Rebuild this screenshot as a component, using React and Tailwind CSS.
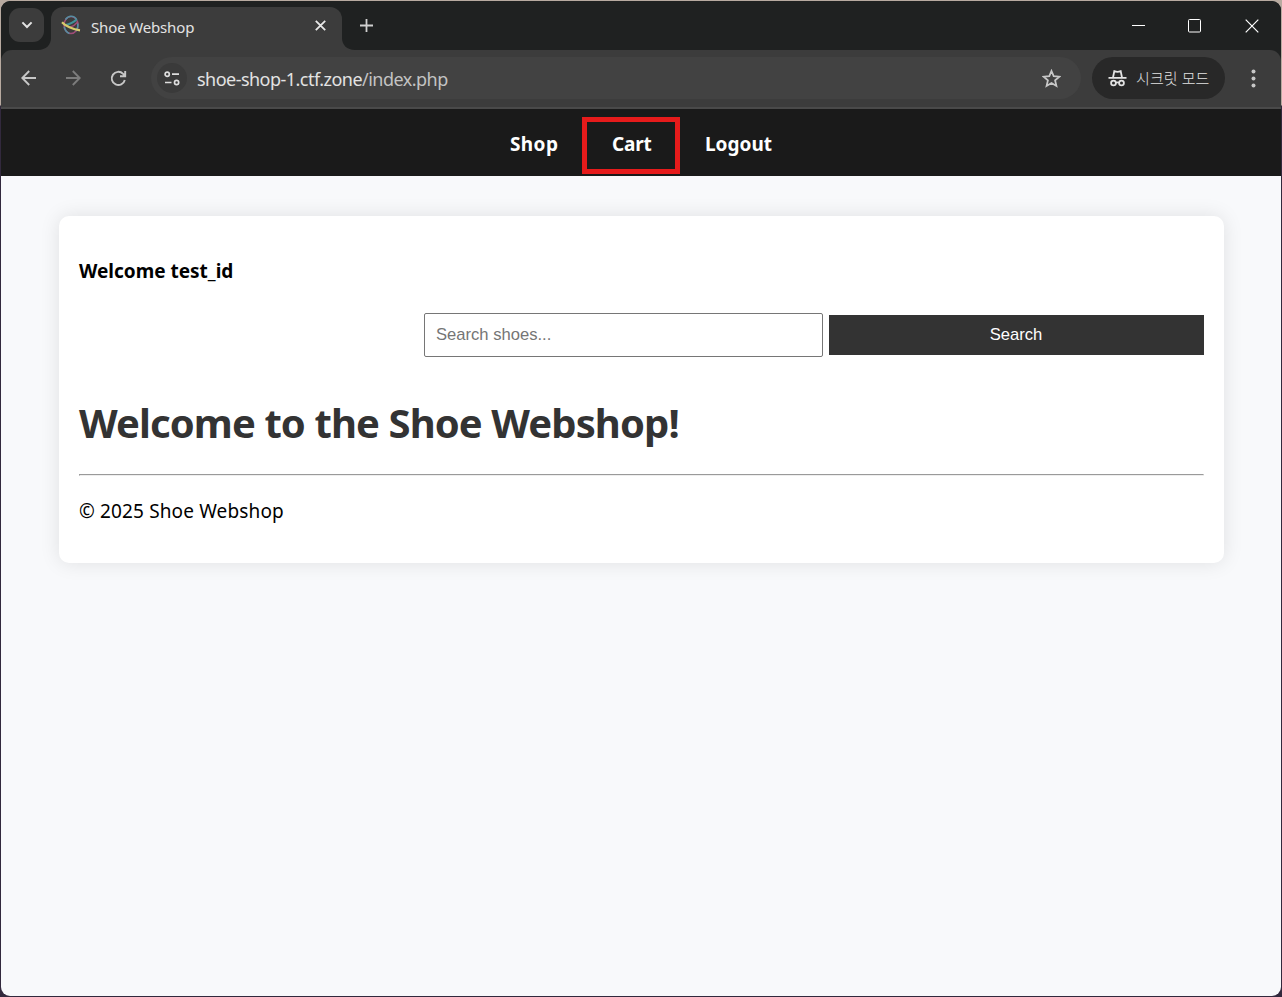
import React from "react";

function TabStrip() {
  return (
    <div className="flex h-[49px] bg-[#1f2121]">
      <div className="ml-2 mt-[7px] flex h-[34px] w-[35px] items-center justify-center rounded-[11px] bg-[#3c3c3c]">
        <svg width="12" height="8" viewBox="0 0 12 8" fill="none" stroke="#e3e3e3" strokeWidth="2">
          <path d="M1.400 1.400 6 6l4.600-4.600" />
        </svg>
      </div>
      <svg className="-mr-px ml-[-6px] mt-[37px] shrink-0" width="14" height="12" viewBox="0 0 14 12">
        <path d="M14 0v12H0C8 12 13 7 13 0z" fill="#3c3c3c" />
      </svg>
      <div className="mt-[6px] flex h-[43px] w-[291px] items-start rounded-t-[12px] bg-[#3c3c3c]">
        <svg className="ml-[10px] mt-[8px] shrink-0" width="20" height="21" viewBox="0 0 20 21" fill="none">
          <ellipse cx="10" cy="10" rx="7" ry="8.600" stroke="#a04c78" strokeWidth="1.500" />
          <path d="M4.500 4.500C6 2.300 8 1.300 10 1.300s4.500 1.200 5.800 3.600M3.200 12c1 3.500 3 5.800 5.200 6.400M16.900 8.500c.3 3-.3 5.500-1.700 7.500" stroke="#558fa3" strokeWidth="1.600" />
          <path d="M4 10.300c4-1 8.300-2.600 11.500-5.800" stroke="#3f9099" strokeWidth="2" />
          <path d="M9 12.300c3-1 5.500-2.600 7.800-5.300" stroke="#a04c78" strokeWidth="1.500" />
          <path d="M1 7.200c3 3.500 11 7.200 18 8.200" stroke="#d8ca6b" strokeWidth="2.200" />
        </svg>
        <span className="ml-[10px] mt-[9px] w-[104px] whitespace-nowrap text-[15px] leading-[23px] tracking-[-0.150px] text-[#e3e3e3]">Shoe Webshop</span>
        <svg className="ml-[120px] mt-[13px] shrink-0" width="11" height="11" viewBox="0 0 11 11" stroke="#e8e8e8" strokeWidth="1.800">
          <path d="m.8.8 9.400 9.400M10.200.8.8 10.200" />
        </svg>
      </div>
      <svg className="-ml-px mt-[37px] shrink-0" width="14" height="12" viewBox="0 0 14 12">
        <path d="M0 0v12h14C6 12 1 7 1 0z" fill="#3c3c3c" />
      </svg>
      <svg className="ml-[5px] mt-[18px] shrink-0" width="13" height="13" viewBox="0 0 13 13" stroke="#d0d0d0" strokeWidth="1.800">
        <path d="M6.500 0v13M0 6.500h13" />
      </svg>
      <div className="ml-auto mr-[22px] mt-[18px] flex items-start gap-[43px]">
        <svg width="13" height="14" viewBox="0 0 13 14"><path d="M0 6h13v1H0z" fill="#fff" /></svg>
        <svg width="14" height="14" viewBox="0 0 14 14" fill="none" stroke="#fff"><rect x=".5" y=".5" width="12" height="12.500" rx="1" /></svg>
        <svg width="14" height="14" viewBox="0 0 14 14" stroke="#fff" strokeWidth="1.200"><path d="m.7.700 12.600 12.600M13.300.700.7 13.300" /></svg>
      </div>
    </div>
  );
}

function Toolbar() {
  return (
    <div className="flex h-[59px] items-start rounded-t-[11px] border-b-2 border-[#4a4a4a] bg-[#3c3c3c]">
      <svg className="ml-5 mt-[20px]" width="15" height="16" viewBox="0 0 15 16" fill="none" stroke="#c7c7c7" strokeWidth="1.900">
        <path d="M15 8H1.400M8.200 1 1.300 8l6.900 7" />
      </svg>
      <svg className="ml-[30px] mt-[20px]" width="15" height="16" viewBox="0 0 15 16" fill="none" stroke="#7c7c7c" strokeWidth="1.900">
        <path d="M0 8h13.600M6.800 1l6.900 7-6.900 7" />
      </svg>
      <svg className="ml-[29px] mt-[20px]" width="17" height="17" viewBox="0 0 17 17" fill="none" stroke="#c7c7c7" strokeWidth="1.900">
        <path d="M14.800 10a6.600 6.600 0 1 1-1.700-6.200L15 5.700M15.200 1v5.200H10" />
      </svg>
      <div className="ml-[24px] mt-[7px] flex h-[42px] w-[930px] items-center rounded-full bg-[#424242]">
        <div className="ml-[6px] flex h-[30px] w-[30px] items-center justify-center rounded-full bg-[#3a3a3a]">
          <svg width="16" height="15" viewBox="0 0 16 15" fill="none" stroke="#dedede" strokeWidth="1.700">
            <circle cx="3.200" cy="3.200" r="2.100" />
            <path d="M8 3.200h7M1 11.500h6.500" />
            <circle cx="12.600" cy="11.500" r="2.100" />
          </svg>
        </div>
        <span className="ml-[10px] mt-[2px] whitespace-nowrap text-[18px] leading-6 tracking-[-0.530px] text-[#e3e3e3]">shoe-shop-1.ctf.zone<span className="text-[#c3c3c3]">/index.php</span></span>
        <svg className="ml-auto mr-5 mt-px" width="19" height="19" viewBox="0 0 19 19" fill="none" stroke="#c7c7c7" strokeWidth="1.800">
          <path d="m9.500 2 2.200 5.200 5.700.5-4.300 3.700 1.300 5.500-4.900-2.900-4.900 2.900 1.300-5.500-4.300-3.700 5.700-.5z" />
        </svg>
      </div>
      <div className="ml-[11px] mt-[7px] flex h-[42px] w-[133px] items-center rounded-full bg-[#282828]">
        <svg className="ml-4 shrink-0" width="19" height="18" viewBox="0 0 19 18" fill="none" stroke="#e3e3e3" strokeWidth="1.800">
          <path d="M5 8.500 6.300 2.200q3.200 1.200 6.400 0L14 8.500M.5 8.900h18" />
          <circle cx="5.500" cy="14" r="2.400" />
          <circle cx="13.500" cy="14" r="2.400" />
          <path d="M7.900 13.700q1.600-.8 3.200 0" />
        </svg>
        <span className="ml-[9px] whitespace-nowrap text-[15px] font-light leading-5 tracking-[0.100px] text-[#e3e3e3]">시크릿 모드</span>
      </div>
      <svg className="ml-[26px] mt-[19px]" width="5" height="19" viewBox="0 0 5 19" fill="#c7c7c7">
        <circle cx="2.500" cy="2.500" r="2" /><circle cx="2.500" cy="9.500" r="2" /><circle cx="2.500" cy="16.500" r="2" />
      </svg>
    </div>
  );
}

export default function App() {
  return (
    <div className="h-[997px] w-[1282px] overflow-hidden bg-[linear-gradient(#b8aaa0_0,#b8aaa0_105px,#32293d_106px)] p-px font-['Noto_Sans','Noto_Sans_CJK_KR',sans-serif]">
      <div className="flex h-[995px] w-[1280px] flex-col overflow-hidden rounded-[9px] bg-[#f8f9fb]">
        <div className="bg-[#1f2121]">
          <TabStrip />
          <Toolbar />
        </div>
        <nav className="flex h-[67px] shrink-0 items-start bg-[#1a1a1a] pl-[509px] pt-[21px] text-[19px] font-bold leading-7 text-white">
          <a className="w-[102px] tracking-[0.400px]">Shop</a>
          <a className="relative w-[93px] tracking-[-0.200px]">
            Cart
            <span className="absolute -left-[30px] -top-[13px] h-[57px] w-[98px] border-[5px] border-[#e61b1b]" />
          </a>
          <a>Logout</a>
        </nav>
        <main className="ml-[58px] mt-10 flex h-[347px] w-[1165px] shrink-0 flex-col rounded-[10px] bg-white px-5 shadow-[0_0_20px_rgba(0,0,0,0.1)]">
          <p className="mt-[41px] whitespace-nowrap text-[19px] font-bold leading-7 text-black">Welcome test_id</p>
          <form className="mt-7 flex h-11 items-center justify-end gap-[6px] font-['Liberation_Sans',sans-serif] text-[16.600px]">
            <input
              className="h-11 w-[399px] rounded-[2px] border border-[#767676] bg-white px-[11px] placeholder:text-[#757575]"
              placeholder="Search shoes..."
            />
            <button type="button" className="h-10 w-[375px] bg-[#333] pr-px text-white">Search</button>
          </form>
          <h1 className="mt-[39px] whitespace-nowrap text-[40px] font-bold leading-[54px] tracking-[-0.900px] text-[#333]">Welcome to the Shoe Webshop!</h1>
          <hr className="mt-6 h-[2px] border border-[#eee] border-l-[#9a9a9a] border-t-[#9a9a9a]" />
          <p className="mt-[21px] whitespace-nowrap text-[19px] leading-7 tracking-[0.140px] text-black">© 2025 Shoe Webshop</p>
        </main>
      </div>
    </div>
  );
}
